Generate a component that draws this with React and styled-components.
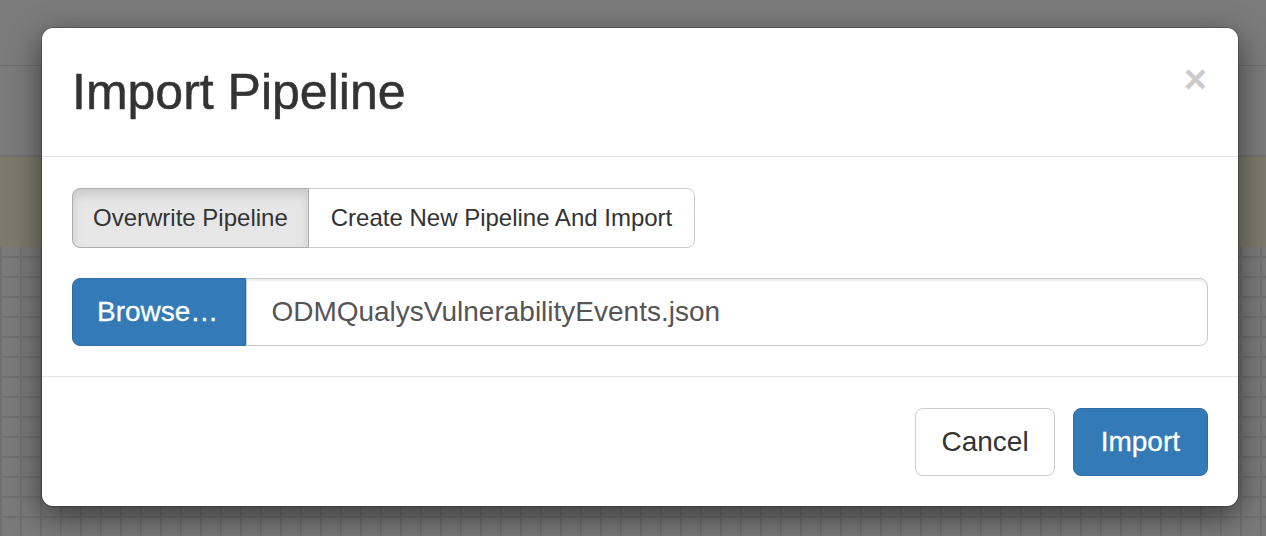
import React from "react";
import styled, { createGlobalStyle } from "styled-components";

const GlobalStyle = createGlobalStyle`
    html, body {
        margin: 0;
        padding: 0;
        background: #7b7b7b;
    }
    body {
        font-family: "Liberation Sans", Arial, Helvetica, sans-serif;
        color: #333;
    }
    * {
        box-sizing: border-box;
    }
`;

const Page = styled.div`
    position: relative;
    width: 1266px;
    height: 536px;
    overflow: hidden;
    display: flex;
    flex-direction: column;
    background: #7b7b7b;
`;

const TopBar = styled.div`
    flex: none;
    height: 66px;
    border-bottom: 1px solid #6e6e6e;
`;

const SubBar = styled.div`
    flex: none;
    height: 91px;
    border-bottom: 2px solid #717171;
`;

const Band = styled.div`
    flex: none;
    height: 90px;
    background: #7b7a6c;
    border-top: 1px solid #83796a;
    border-bottom: 1px solid #83796a;
`;

const Grid = styled.div`
    flex: 1;
    background-color: #7a7a7a;
    background-image:
        linear-gradient(to right, #707070 2px, transparent 2px),
        linear-gradient(to bottom, #707070 2px, transparent 2px);
    background-size: 20px 20px;
    background-position: 0 9px;
`;

const Backdrop = styled.div`
    position: absolute;
    inset: 0;
    padding: 27px 0 0 41px;
`;

const Modal = styled.div`
    width: 1198px;
    background: #fff;
    background-clip: padding-box;
    border: 1px solid rgba(0, 0, 0, 0.2);
    border-radius: 12px;
    box-shadow: 0 10px 30px rgba(0, 0, 0, 0.5);
`;

const Header = styled.div`
    display: flex;
    justify-content: space-between;
    align-items: flex-start;
    padding: 30px;
    border-bottom: 1px solid #e5e5e5;
`;

const Title = styled.h4`
    margin: 0;
    font-size: 50px;
    line-height: 68px;
    font-weight: 400;
    color: #333;
    -webkit-text-stroke: 0.5px #333;
`;

const Close = styled.button`
    margin: 1px 1px 0 0;
    padding: 0;
    border: 0;
    background: none;
    font-family: "Liberation Sans", Arial, sans-serif;
    font-size: 40px;
    font-weight: 700;
    line-height: 1;
    color: #000;
    opacity: 0.2;
    cursor: pointer;
`;

const Body = styled.div`
    padding: 31px 30px 30px;
`;

const ToggleGroup = styled.div`
    display: inline-flex;
    height: 60px;
`;

const ToggleButton = styled.button`
    height: 60px;
    padding: 0 ${(p) => (p.$first ? "20px" : "22px")};
    margin-left: ${(p) => (p.$first ? "0" : "-1px")};
    font-family: inherit;
    font-size: 24px;
    color: #333;
    background: ${(p) => (p.$active ? "#e6e6e6" : "#fff")};
    border: 1px solid ${(p) => (p.$active ? "#adadad" : "#ccc")};
    box-shadow: ${(p) => (p.$active ? "inset 0 6px 10px rgba(0, 0, 0, 0.125)" : "none")};
    border-radius: ${(p) => (p.$first ? "8px 0 0 8px" : "0 8px 8px 0")};
    position: relative;
    z-index: ${(p) => (p.$active ? 2 : 1)};
`;

const InputGroup = styled.div`
    display: flex;
    height: 68px;
    margin-top: 30px;
`;

const BrowseLabel = styled.label`
    display: flex;
    align-items: center;
    padding: 0 27px 0 24px;
    font-size: 28px;
    color: #fff;
    -webkit-text-stroke: 0.3px #fff;
    background: #337ab7;
    border: 1px solid #2e6da4;
    border-radius: 8px 0 0 8px;
`;

const FileName = styled.input`
    flex: 1;
    min-width: 0;
    height: 68px;
    padding: 0 24px;
    font-family: inherit;
    font-size: 28px;
    color: #555;
    background: #fff;
    border: 1px solid #ccc;
    border-radius: 0 8px 8px 0;
    box-shadow: inset 0 2px 2px rgba(0, 0, 0, 0.075);
    outline: none;
`;

const Footer = styled.div`
    display: flex;
    justify-content: flex-end;
    gap: 18px;
    padding: 31px 30px 30px;
    border-top: 1px solid #e5e5e5;
`;

const Button = styled.button`
    height: 68px;
    padding: 0 ${(p) => (p.$primary ? "27px" : "25px")};
    font-family: inherit;
    font-size: 28px;
    border-radius: 8px;
    color: ${(p) => (p.$primary ? "#fff" : "#333")};
    -webkit-text-stroke: ${(p) => (p.$primary ? "0.3px #fff" : "0")};
    background: ${(p) => (p.$primary ? "#337ab7" : "#fff")};
    border: 1px solid ${(p) => (p.$primary ? "#2e6da4" : "#ccc")};
    cursor: pointer;
`;

const App = () => {
    return (
        <Page>
            <GlobalStyle />
            <TopBar />
            <SubBar />
            <Band />
            <Grid />
            <Backdrop>
                <Modal>
                    <Header>
                        <Title>Import Pipeline</Title>
                        <Close aria-label="Close">×</Close>
                    </Header>
                    <Body>
                        <ToggleGroup>
                            <ToggleButton $first $active>Overwrite Pipeline</ToggleButton>
                            <ToggleButton>Create New Pipeline And Import</ToggleButton>
                        </ToggleGroup>
                        <InputGroup>
                            <BrowseLabel>Browse…</BrowseLabel>
                            <FileName readOnly value="ODMQualysVulnerabilityEvents.json" />
                        </InputGroup>
                    </Body>
                    <Footer>
                        <Button>Cancel</Button>
                        <Button $primary>Import</Button>
                    </Footer>
                </Modal>
            </Backdrop>
        </Page>
    );
};

export default App;
